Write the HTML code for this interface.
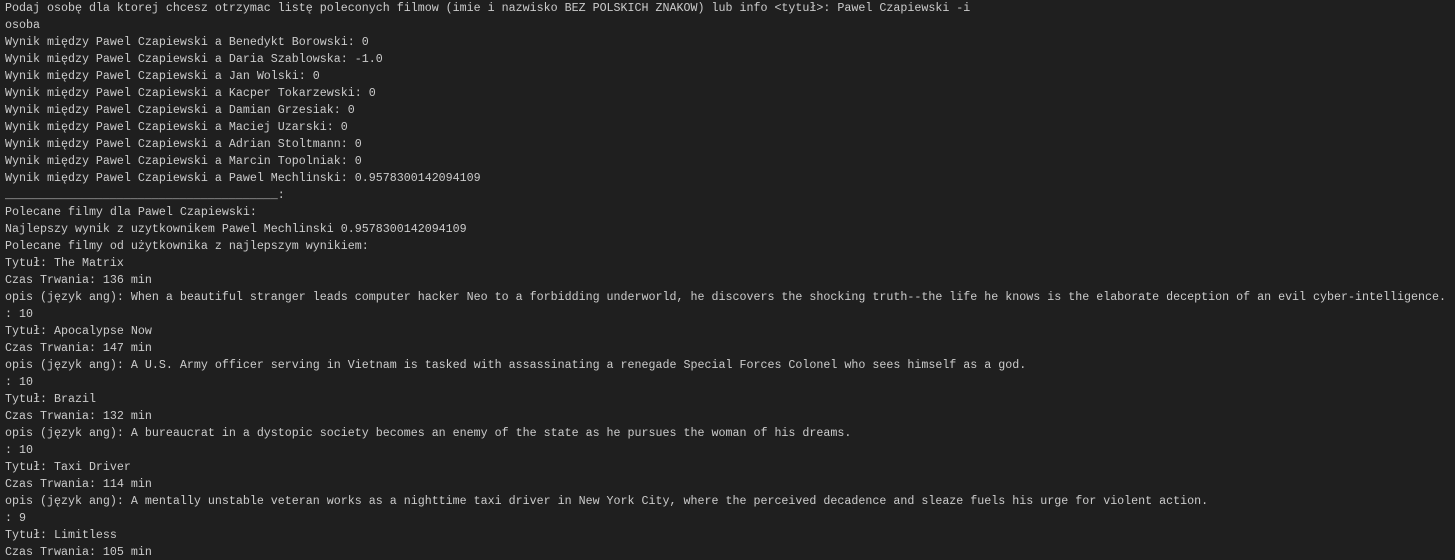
<!DOCTYPE html>
<html><head><meta charset="utf-8"><style>
html,body{margin:0;padding:0;background:#1f1f1f;width:1455px;height:560px;overflow:hidden}
pre{margin:0;padding:0 0 0 5px;font-family:"Liberation Mono","DejaVu Sans Mono",monospace;font-size:11.67px;line-height:17px;color:#cccccc;white-space:pre}
</style></head><body><pre>Podaj osobę dla ktorej chcesz otrzymac listę poleconych filmow (imie i nazwisko BEZ POLSKICH ZNAKOW) lub info &lt;tytuł&gt;: Pawel Czapiewski -i
osoba
Wynik między Pawel Czapiewski a Benedykt Borowski: 0
Wynik między Pawel Czapiewski a Daria Szablowska: -1.0
Wynik między Pawel Czapiewski a Jan Wolski: 0
Wynik między Pawel Czapiewski a Kacper Tokarzewski: 0
Wynik między Pawel Czapiewski a Damian Grzesiak: 0
Wynik między Pawel Czapiewski a Maciej Uzarski: 0
Wynik między Pawel Czapiewski a Adrian Stoltmann: 0
Wynik między Pawel Czapiewski a Marcin Topolniak: 0
Wynik między Pawel Czapiewski a Pawel Mechlinski: 0.9578300142094109
_______________________________________:
Polecane filmy dla Pawel Czapiewski:
Najlepszy wynik z uzytkownikem Pawel Mechlinski 0.9578300142094109
Polecane filmy od użytkownika z najlepszym wynikiem:
Tytuł: The Matrix
Czas Trwania: 136 min
opis (język ang): When a beautiful stranger leads computer hacker Neo to a forbidding underworld, he discovers the shocking truth--the life he knows is the elaborate deception of an evil cyber-intelligence.
: 10
Tytuł: Apocalypse Now
Czas Trwania: 147 min
opis (język ang): A U.S. Army officer serving in Vietnam is tasked with assassinating a renegade Special Forces Colonel who sees himself as a god.
: 10
Tytuł: Brazil
Czas Trwania: 132 min
opis (język ang): A bureaucrat in a dystopic society becomes an enemy of the state as he pursues the woman of his dreams.
: 10
Tytuł: Taxi Driver
Czas Trwania: 114 min
opis (język ang): A mentally unstable veteran works as a nighttime taxi driver in New York City, where the perceived decadence and sleaze fuels his urge for violent action.
: 9
Tytuł: Limitless
Czas Trwania: 105 min</pre></body></html>
